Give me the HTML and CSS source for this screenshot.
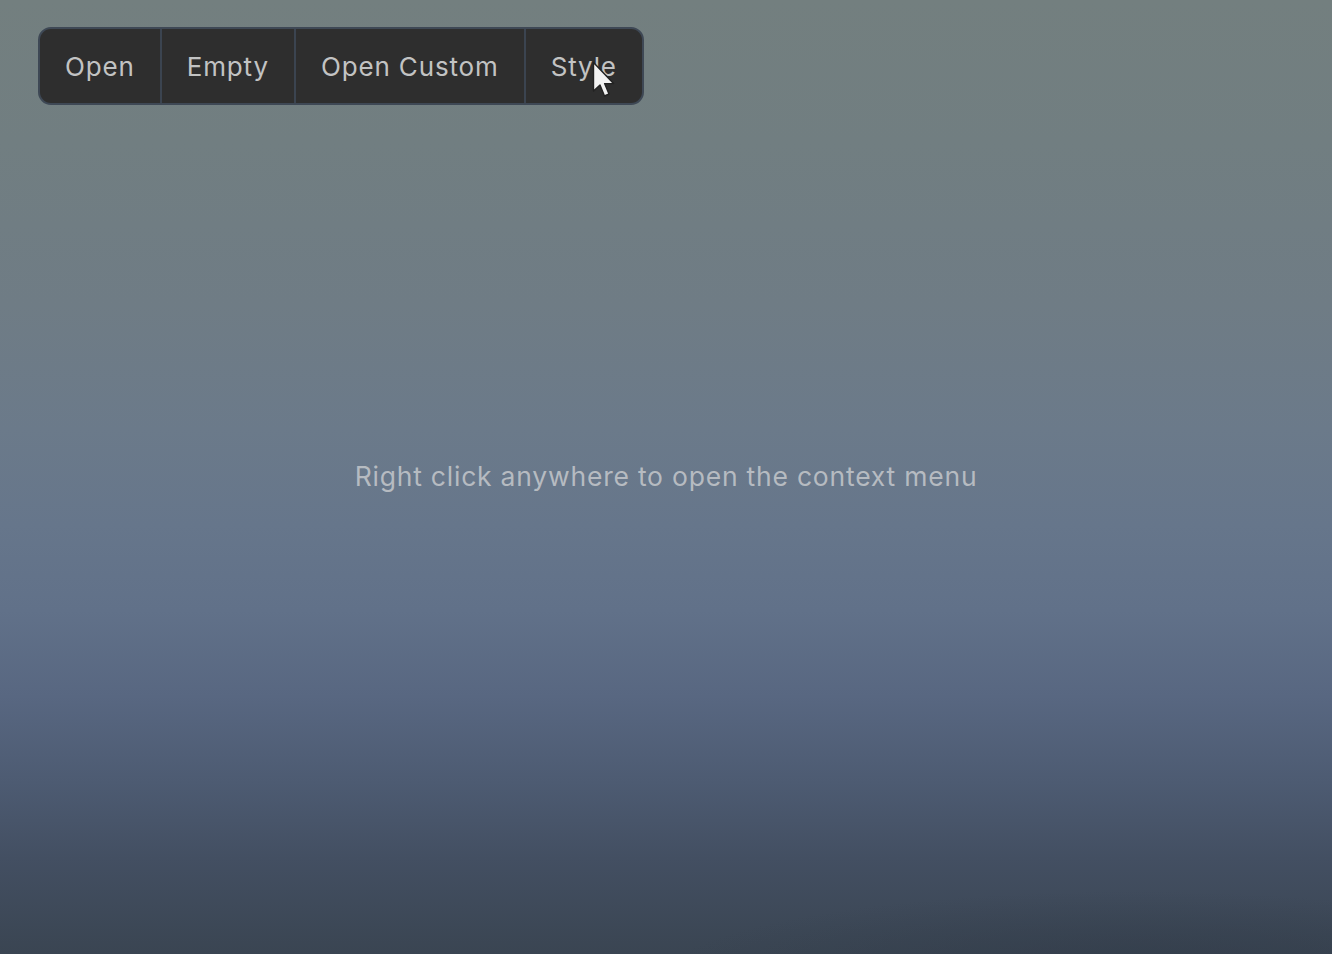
FILE: index.html
```html
<!DOCTYPE html>
<html lang="en">
<head>
<meta charset="utf-8">
<title>Context menu demo</title>
<link rel="stylesheet" href="styles.css">
</head>
<body>
<div class="page">
  <p class="hint">Right click anywhere to open the context menu</p>
  <nav class="toolbar">
    <button class="tb-btn">Open</button>
    <button class="tb-btn">Empty</button>
    <button class="tb-btn">Open Custom</button>
    <button class="tb-btn tb-last">Style
      <svg class="cursor" width="26" height="38" viewBox="0 0 26 38" aria-hidden="true">
        <path d="M1.5 1.5 L1.5 30 L8 24 L12.5 35 L17 33 L12.6 22.6 L21.5 22.6 Z" fill="#f2f2f2" stroke="#222" stroke-width="1.4" stroke-linejoin="round"/>
      </svg>
    </button>
  </nav>
</div>
</body>
</html>
```
FILE: styles.css
```css
html, body {
  margin: 0;
  height: 100%;
}
body {
  font-family: Inter, "Noto Sans", "Liberation Sans", sans-serif;
  background:
    radial-gradient(ellipse 45% 12% at 85% 103%, rgba(48,58,72,0.7), rgba(48,58,72,0) 80%),
    linear-gradient(180deg,
      #737f7f 0%,
      #717e81 15%,
      #6f7c85 32%,
      #6b7a8a 45%,
      #66768b 55%,
      #617189 64%,
      #586781 73%,
      #4d5b72 82%,
      #434f62 90%,
      #3a4552 100%);
  overflow: hidden;
}
.page {
  display: grid;
  height: 100%;
}
.hint {
  grid-area: 1 / 1;
  align-self: center;
  justify-self: center;
  margin: 0 0 2px 0;
  font-size: 26.5px;
  letter-spacing: 0.78px;
  color: rgba(200, 203, 206, 0.82);
}
.toolbar {
  grid-area: 1 / 1;
  align-self: start;
  justify-self: start;
  margin: 27px 0 0 38px;
  display: flex;
  height: 74px;
  box-sizing: content-box;
  background: #2e2e2e;
  border: 2px solid #3e4855;
  border-radius: 13px;
}
.tb-btn {
  position: relative;
  font: inherit;
  font-size: 26px;
  letter-spacing: 0.85px;
  color: #c2c3c3;
  background: transparent;
  border: 0;
  border-right: 2px solid #3b4450;
  padding: 0 25px;
  cursor: default;
}
.tb-last {
  border-right: 0;
}
.cursor {
  position: absolute;
  left: 66px;
  top: 32px;
}
```
